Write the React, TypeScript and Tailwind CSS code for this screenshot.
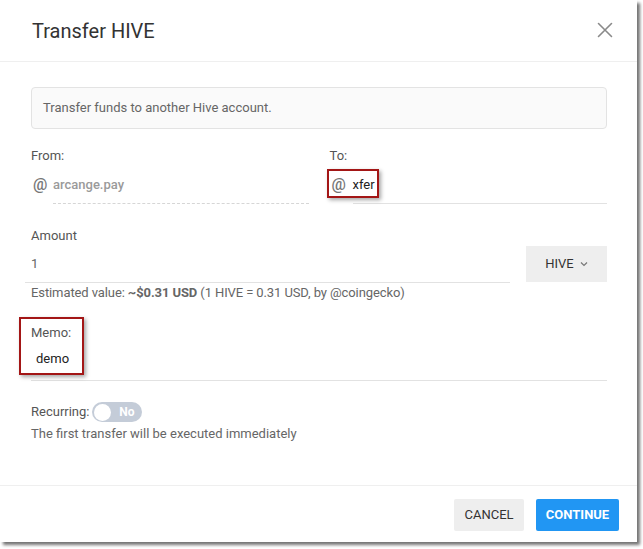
import React from 'react';

export default function App() {
  return (
    <div className="min-h-screen bg-white" style={{ fontFamily: 'Roboto, "Liberation Sans", sans-serif' }}>
      <div className="relative w-[637px] h-[542px] bg-white flex flex-col shadow-[3px_3px_3px_rgba(0,0,0,0.55)]">
        {/* header */}
        <div className="h-[62px] flex items-center justify-between pl-[32px] pr-[24px] border-b border-[#efefef]">
          <h1 className="text-[20px] text-[#333] font-normal mt-[1px]">Transfer HIVE</h1>
          <svg width="16" height="16" viewBox="0 0 16 16" className="mt-[-2px]">
            <path d="M1.5 1.5 L14.5 14.5 M14.5 1.5 L1.5 14.5" stroke="#8a8a8a" strokeWidth="1.6" strokeLinecap="round" />
          </svg>
        </div>

        {/* body */}
        <div className="flex-1 pl-[31px] pr-[30px] pt-[25px] text-[13px]">
          <div className="h-[42px] border border-[#e3e3e3] bg-[#fafafa] rounded-[4px] px-[11px] flex items-center text-[#666]">
            Transfer funds to another Hive account.
          </div>

          <div className="grid grid-cols-2 gap-[21px] mt-[19px]">
            <div>
              <div className="h-[16px] leading-[16px] text-[#555]">From:</div>
              <div className="flex mt-[8px]">
                <span className="w-[22px] h-[32px] pb-[6px] flex items-center pl-[2px] text-[16px] font-medium text-[#777]">@</span>
                <div className="flex-1 h-[32px] pb-[6px] flex items-center border-b border-dashed border-[#d6d6d6] text-[#9a9a9a] font-medium">
                  arcange.pay
                </div>
              </div>
            </div>
            <div>
              <div className="h-[16px] leading-[16px] text-[#555]">To:</div>
              <div className="flex mt-[8px]">
                <span className="w-[23px] h-[32px] pb-[6px] flex items-center pl-[2px] text-[16px] font-medium text-[#777]">@</span>
                <div className="flex-1 h-[32px] pb-[6px] flex items-center border-b border-[#e2e2e2] text-[#222]">
                  xfer
                </div>
              </div>
            </div>
          </div>

          <div className="mt-[24px] h-[16px] leading-[16px] text-[#555]">Amount</div>
          <div className="flex items-start mt-[2px]">
            <div className="flex-1 ml-[-6px] pl-[6px] h-[37px] flex items-center border-b border-[#e2e2e2] text-[#666]">1</div>
            <button className="ml-[16px] w-[81px] h-[36px] bg-[#eeeeee] flex items-center justify-center gap-[6px] text-[#333]">
              HIVE
              <svg width="8" height="6" viewBox="0 0 8 6">
                <path d="M1 1.5 L4 4.5 L7 1.5" fill="none" stroke="#777" strokeWidth="1.2" />
              </svg>
            </button>
          </div>
          <div className="mt-[2px] h-[16px] leading-[16px] text-[#666] tracking-[-0.1px]">
            Estimated value: <span className="font-bold">~$0.31 USD</span> (1 HIVE = 0.31 USD, by @coingecko)
          </div>

          <div className="mt-[24px] h-[16px] leading-[16px] text-[#555]">Memo:</div>
          <div className="h-[40px] pb-[3px] pl-[5px] flex items-center border-b border-[#e2e2e2] text-[#222]">demo</div>

          <div className="mt-[21px] flex items-center gap-[3px]">
            <span className="text-[#555]">Recurring:</span>
            <div className="w-[50px] h-[20px] rounded-full bg-[#c4ccd8] flex items-center pl-[2px] pr-[8px] justify-between">
              <span className="w-[17px] h-[17px] rounded-full bg-white"></span>
              <span className="text-[12px] font-bold text-white">No</span>
            </div>
          </div>
          <div className="mt-[4px] h-[16px] leading-[16px] text-[#666]">The first transfer will be executed immediately</div>
        </div>

        {/* footer */}
        <div className="border-t border-[#efefef] pt-[13px] pb-[11px] pr-[18px] flex justify-end gap-[12px] text-[13px]">
          <button className="w-[70px] h-[32px] bg-[#eeeeee] text-[#333] rounded-[2px]">CANCEL</button>
          <button className="w-[83px] h-[32px] bg-[#2196f3] text-white rounded-[2px] font-bold">CONTINUE</button>
        </div>

        {/* annotation boxes */}
        <div className="absolute left-[327px] top-[169px] w-[52px] h-[29px] border-2 border-[#a31616] shadow-[2px_2px_4px_rgba(0,0,0,0.35)]"></div>
        <div className="absolute left-[19px] top-[317px] w-[65px] h-[58px] border-2 border-[#a31616] shadow-[2px_2px_4px_rgba(0,0,0,0.35)]"></div>
      </div>
    </div>
  );
}
